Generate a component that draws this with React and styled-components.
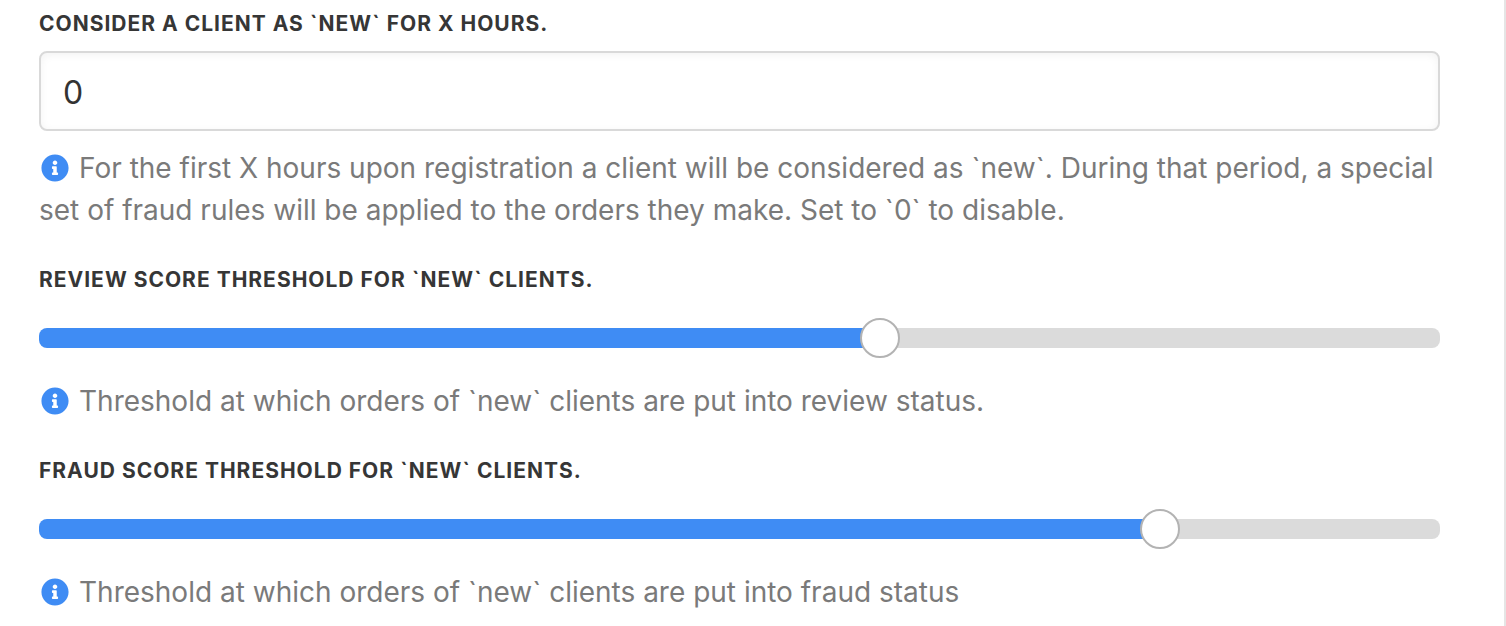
import { useState } from "react";
import styled, { createGlobalStyle } from "styled-components";
import { FaInfoCircle } from "react-icons/fa";

const GlobalStyle = createGlobalStyle`
  * {
    box-sizing: border-box;
  }
  body {
    margin: 0;
    background-color: #fff;
    font-family: Inter, "Liberation Sans", sans-serif;
  }
`

const Panel = styled.form`
  min-height: 100vh;
  padding: 7px 64px 12px 39px;
  display: flex;
  flex-direction: column;
  gap: 32px;
  border-right: 2px solid #e5e5e5;
`

const Field = styled.div`
  display: flex;
  flex-direction: column;
`

const Label = styled.label`
  font-size: 21px;
  line-height: 34px;
  font-weight: 700;
  letter-spacing: 1px;
  text-transform: uppercase;
  color: #363636;
`

const TextInput = styled.input`
  width: 100%;
  height: 80px;
  margin: 10px 0 16px;
  padding: 2px 22px 0;
  border: 2px solid #d9d9d9;
  border-radius: 8px;
  background-color: #fff;
  box-shadow: inset 0 2px 8px rgba(0, 0, 0, 0.05);
  font-family: inherit;
  font-size: 32px;
  color: #333;
  outline: none;
`

const Help = styled.p`
  margin: 0;
  font-size: 28px;
  line-height: 42px;
  color: #7a7a7a;
  svg {
    width: 28px;
    height: 28px;
    margin: 0 10px 0 2px;
    vertical-align: -4px;
    color: #3f8cf4;
  }
`

const Track = styled.div`
  height: 20px;
  margin: 31px 0 32px;
  display: flex;
  align-items: center;
  border-radius: 8px;
  background-color: #dbdbdb;
  background-image: linear-gradient(#3f8cf4, #3f8cf4);
  background-repeat: no-repeat;
`

// wider than the track by half a thumb on each side, so the thumb is centered on its value
const Range = styled.input`
  flex: none;
  width: calc(100% + 40px);
  height: 40px;
  margin: 0 -20px;
  appearance: none;
  background: transparent;
  outline: none;
  cursor: pointer;
  &::-webkit-slider-thumb {
    appearance: none;
    width: 40px;
    height: 40px;
    border: 2px solid #b3b3b3;
    border-radius: 50%;
    background-color: #fff;
  }
`

const HelpText = ({ id, children }) => (
  <Help id={id}>
    <FaInfoCircle aria-hidden="true" />
    {children}
  </Help>
);

const SliderField = ({ id, label, help, initial }) => {
  const [value, setValue] = useState(initial);

  return (
    <Field>
      <Label htmlFor={id}>{label}</Label>
      <Track style={{ backgroundSize: `${value}% 100%` }}>
        <Range
          id={id}
          type="range"
          min="0"
          max="100"
          value={value}
          aria-describedby={`${id}-help`}
          onChange={(e) => setValue(Number(e.target.value))}
        />
      </Track>
      <HelpText id={`${id}-help`}>{help}</HelpText>
    </Field>
  );
};

const App = () => {
  const [hours, setHours] = useState("0");

  return (
    <>
      <GlobalStyle />
      <Panel>
        <Field>
          <Label htmlFor="hours">Consider a client as `new` for X hours.</Label>
          <TextInput
            id="hours"
            type="text"
            inputMode="numeric"
            value={hours}
            aria-describedby="hours-help"
            onChange={(e) => setHours(e.target.value)}
          />
          <HelpText id="hours-help">
            For the first X hours upon registration a client will be considered as `new`. During that period, a special set of fraud rules will be applied to the orders they make. Set to `0` to disable.
          </HelpText>
        </Field>
        <SliderField
          id="review"
          label="Review score threshold for `new` clients."
          help="Threshold at which orders of `new` clients are put into review status."
          initial={60}
        />
        <SliderField
          id="fraud"
          label="Fraud score threshold for `new` clients."
          help="Threshold at which orders of `new` clients are put into fraud status"
          initial={80}
        />
      </Panel>
    </>
  )
};

export default App;
